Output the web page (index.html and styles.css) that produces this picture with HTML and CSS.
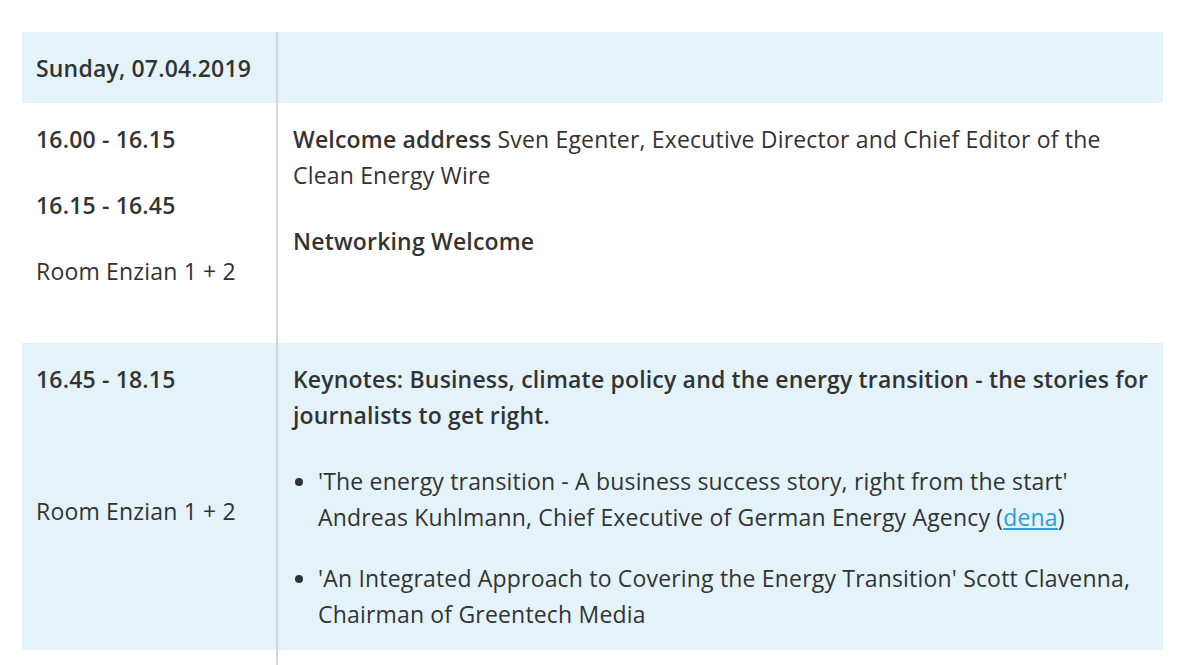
FILE: index.html
```html
<!DOCTYPE html>
<html lang="en">
<head>
<meta charset="utf-8">
<title>Programme</title>
<link rel="stylesheet" href="styles.css">
</head>
<body>
<table class="schedule">
  <colgroup>
    <col class="col-time">
    <col class="col-info">
  </colgroup>
  <tr class="row-shaded row-day">
    <td><p><strong>Sunday, 07.04.2019</strong></p></td>
    <td></td>
  </tr>
  <tr class="row-welcome">
    <td>
      <p><strong>16.00 - 16.15</strong></p>
      <p><strong>16.15 - 16.45</strong></p>
      <p>Room Enzian 1 + 2</p>
    </td>
    <td>
      <p><strong>Welcome address</strong> Sven Egenter, Executive Director and Chief Editor of the Clean Energy Wire</p>
      <p><strong>Networking Welcome</strong></p>
    </td>
  </tr>
  <tr class="row-shaded">
    <td>
      <p><strong>16.45 - 18.15</strong></p>
      <p>&nbsp;</p>
      <p>Room Enzian 1 + 2</p>
    </td>
    <td>
      <p><strong>Keynotes: Business, climate policy and the energy transition - the stories for journalists to get right.</strong></p>
      <ul>
        <li>'The energy transition - A business success story, right from the start' Andreas Kuhlmann, Chief Executive of German Energy Agency (<a href="#">dena</a>)</li>
        <li>'An Integrated Approach to Covering the Energy Transition' Scott Clavenna, Chairman of Greentech Media</li>
      </ul>
    </td>
  </tr>
  <tr class="row-next">
    <td></td>
    <td></td>
  </tr>
</table>
</body>
</html>
```

FILE: styles.css
```css
html, body {
  margin: 0;
  padding: 0;
  background: #ffffff;
}

body {
  font-family: "Open Sans", "Liberation Sans", sans-serif;
  font-size: 23px;
  line-height: 36px;
  letter-spacing: 0.18px;
  color: #333333;
}

.schedule {
  border-collapse: collapse;
  width: 1141px;
  margin: 32px 0 0 22px;
  table-layout: fixed;
}

.col-time {
  width: 255px;
}

.schedule td {
  vertical-align: top;
  padding: 18px 12px 17px 15px;
}

.schedule td:first-child {
  padding-left: 14px;
  border-right: 2px solid #d6d6d6;
}

.row-shaded td {
  background: #e4f3fa;
}

.row-welcome {
  height: 240px;
}

.row-shaded + .row-next {
  height: 40px;
}

.row-welcome + .row-shaded td {
  padding-bottom: 18px;
}

.schedule p {
  margin: 0 0 30px 0;
}

.schedule p:last-child {
  margin-bottom: 0;
}

strong {
  font-weight: 600;
}

.schedule ul {
  margin: 0;
  padding-left: 25px;
}

.schedule li {
  margin-bottom: 25px;
}

.schedule li:last-child {
  margin-bottom: 0;
}

.schedule a {
  color: #2b9fd6;
  text-decoration: underline;
}
```
